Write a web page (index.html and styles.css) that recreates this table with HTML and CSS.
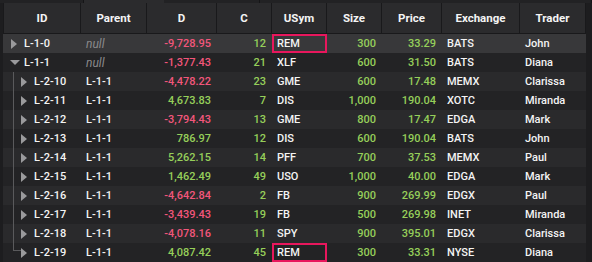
FILE: index.html
```html
<!DOCTYPE html>
<html lang="en">
<head>
    <meta charset="utf-8">
    <title>Trades grid</title>
    <link rel="stylesheet" href="styles.css">
</head>
<body>
    <div class="strip">
        <div class="strip-cell s1"></div>
        <div class="strip-cell s2"></div>
        <div class="strip-cell s3"></div>
        <div class="strip-cell s4"></div>
    </div>

    <div class="grid">
        <div class="row head">
            <div class="cell">ID</div>
            <div class="cell">Parent</div>
            <div class="cell">D</div>
            <div class="cell">C</div>
            <div class="cell">USym</div>
            <div class="cell">Size</div>
            <div class="cell">Price</div>
            <div class="cell">Exchange</div>
            <div class="cell">Trader</div>
        </div>
        <div id="body"></div>
    </div>

    <script>
        // rows: id, parent, d, c, usym, size, price, exchange, trader
        const rows = [
            ['L-1-0', null, -9728.95, 12, 'REM', 300, 33.29, 'BATS', 'John'],
            ['L-1-1', null, -1377.43, 21, 'XLF', 600, 31.50, 'BATS', 'Diana'],
            ['L-2-10', 'L-1-1', -4478.22, 23, 'GME', 600, 17.48, 'MEMX', 'Clarissa'],
            ['L-2-11', 'L-1-1', 4673.83, 7, 'DIS', 1000, 190.04, 'XOTC', 'Miranda'],
            ['L-2-12', 'L-1-1', -3794.43, 13, 'GME', 800, 17.47, 'EDGA', 'Mark'],
            ['L-2-13', 'L-1-1', 786.97, 12, 'DIS', 600, 190.04, 'BATS', 'John'],
            ['L-2-14', 'L-1-1', 5262.15, 14, 'PFF', 700, 37.53, 'MEMX', 'Paul'],
            ['L-2-15', 'L-1-1', 1462.49, 49, 'USO', 1000, 40.00, 'EDGA', 'Mark'],
            ['L-2-16', 'L-1-1', -4642.84, 2, 'FB', 900, 269.99, 'EDGX', 'Paul'],
            ['L-2-17', 'L-1-1', -3439.43, 19, 'FB', 500, 269.98, 'INET', 'Miranda'],
            ['L-2-18', 'L-1-1', -4078.16, 11, 'SPY', 900, 395.01, 'EDGX', 'Clarissa'],
            ['L-2-19', 'L-1-1', 4087.42, 45, 'REM', 300, 33.31, 'NYSE', 'Diana']
        ];
        const flagged = ['L-1-0', 'L-2-19'];

        const fmt = (n, d) => n.toLocaleString('en-US', { minimumFractionDigits: d, maximumFractionDigits: d });

        function idCell(id, parent, last) {
            if (!parent) {
                const open = id === 'L-1-1';
                return `<div class="cell id lvl1"><span class="arrow ${open ? 'down' : 'right'}"></span>${id}</div>`;
            }
            return `<div class="cell id lvl2"><span class="guide ${last ? 'end' : ''}"></span><span class="arrow right"></span>${id}</div>`;
        }

        const body = document.getElementById('body');
        body.innerHTML = rows.map((r, i) => {
            const [id, parent, d, c, usym, size, price, exch, trader] = r;
            const cls = ['row'];
            cls.push(i % 2 ? 'odd' : 'even');
            if (i === 0) cls.push('hover');
            return `<div class="${cls.join(' ')}">
                ${idCell(id, parent, i === rows.length - 1)}
                <div class="cell ${parent ? '' : 'null'}">${parent || 'null'}</div>
                <div class="cell num ${d < 0 ? 'neg' : 'pos'}">${fmt(d, 2)}</div>
                <div class="cell num pos">${c}</div>
                <div class="cell ${flagged.includes(id) ? 'flag' : ''}">${usym}</div>
                <div class="cell num pos">${fmt(size, 0)}</div>
                <div class="cell num pos">${fmt(price, 2)}</div>
                <div class="cell">${exch}</div>
                <div class="cell">${trader}</div>
            </div>`;
        }).join('');
    </script>
</body>
</html>
```

FILE: styles.css
```css
:root {
    --bg: #1d1d1f;
    --head: #2b2b2d;
    --line: #19191b;
    --even: #2a2a2c;
    --odd: #232325;
    --hover: #38383a;
    --text: #f4f4f4;
    --red: #f2567b;
    --green: #96cf5a;
    --flag: #e8175d;
}

body {
    margin: 0;
    background: var(--bg);
    color: var(--text);
    font-family: Roboto, "Liberation Sans", sans-serif;
    font-size: 11px;
    font-weight: 500;
    overflow: hidden;
}

.strip {
    display: flex;
    height: 3px;
}

.strip-cell {
    background: #222224;
    border-right: 1px solid #151517;
}

.s1 { width: 83px; }
.s2 { width: 80px; background: var(--head); border-right: none; }
.s3 { width: 95px; }
.s4 { flex: 1; }

.grid {
    padding-left: 3px;
    width: 583px;
}

.row {
    display: grid;
    grid-template-columns: 78px 66px 70px 55px 55px 55px 60px 78px 66px;
    height: 19px;
}

.row.head {
    height: 30px;
    background: var(--head);
    border-bottom: 1px solid var(--line);
    font-weight: bold;
    font-size: 11.5px;
}

.row.head .cell {
    justify-content: center;
    border-right: 1px solid var(--line);
}

.row.head .cell:first-child {
    border-left: 1px solid var(--line);
}

.row.even { background: var(--even); }
.row.odd { background: var(--odd); }
.row.hover { background: var(--hover); }

.cell {
    display: flex;
    align-items: center;
    padding: 0 5px;
    white-space: nowrap;
    overflow: hidden;
}

.cell.num {
    justify-content: flex-end;
    padding-right: 6px;
}

.neg { color: var(--red); }
.pos { color: var(--green); }

.null {
    color: #8a8a8c;
    font-style: italic;
    font-weight: 400;
    font-size: 12px;
}

.flag {
    box-shadow: inset 0 0 0 2px var(--flag);
}

/* tree column */
.cell.id {
    padding: 0;
    align-items: stretch;
}

.cell.id .arrow {
    align-self: center;
    width: 0;
    height: 0;
}

.arrow.right {
    border-left: 6px solid #9a9a9c;
    border-top: 5px solid transparent;
    border-bottom: 5px solid transparent;
    margin-right: 7px;
}

.arrow.down {
    border-top: 5px solid #9a9a9c;
    border-left: 5px solid transparent;
    border-right: 5px solid transparent;
    margin-left: -1px;
    margin-right: 4px;
}

.lvl1 {
    padding-left: 8px !important;
}

.lvl1, .lvl2 {
    line-height: 19px;
}

.guide {
    margin-left: 10px;
    margin-right: 7px;
    border-left: 1px solid #5a5a5c;
}

.guide.end {
    width: 7px;
    height: 7px;
    margin-right: 0;
    border-bottom: 1px solid #5a5a5c;
}
```
